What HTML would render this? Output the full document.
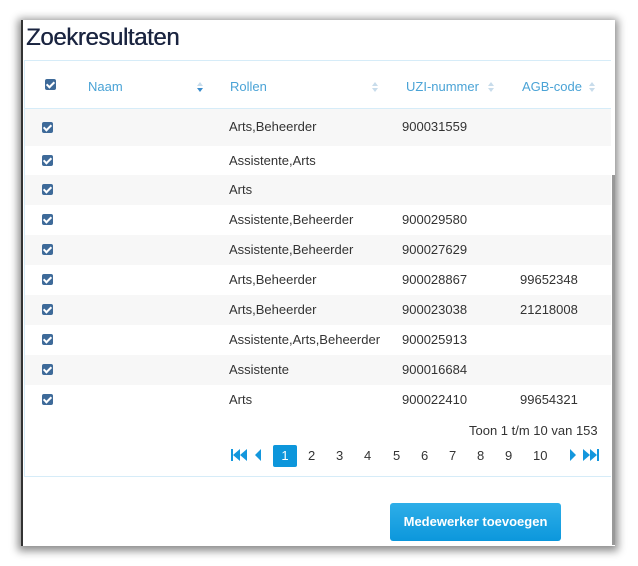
<!DOCTYPE html>
<html><head><style>
body{margin:0;width:638px;height:566px;background:#fff;font-family:"Liberation Sans",sans-serif;position:relative;overflow:hidden}
.panel{position:absolute;left:21px;top:20px;width:592px;height:526px;background:#fff;box-shadow:0 2px 8px 3px rgba(0,0,0,.45);border-left:2px solid #333}
.sb{position:absolute;left:612px;top:175px;width:3px;height:370px;background:#999}
h1{position:absolute;left:26px;top:24px;margin:0;font-size:24px;font-weight:normal;color:#1a2440;letter-spacing:-.4px;text-shadow:0.4px 0 0 #1a2440}
.tbl{position:absolute;left:24px;top:60px;width:586px;height:415px;border:1px solid #d6ecf8;border-right:none}
.hdr{position:absolute;left:0;top:0;width:586px;height:47px;border-bottom:1px solid #d6ecf8}
.h{position:absolute;top:18px;font-size:13px;color:#4aa3d6}
.sort{position:absolute;top:20px;width:6px;height:12px}
.row{position:absolute;left:0;width:586px;height:30px;font-size:13px;color:#333}
.row span{position:absolute;top:7px}
.cb{position:absolute;left:17px;width:11px;height:11px;background:#3e6a99;border-radius:2px}
.cb:after{content:"";position:absolute;left:3px;top:1px;width:3px;height:6px;border:solid #fff;border-width:0 2px 2px 0;transform:rotate(45deg)}
.pg{position:absolute;top:448px;font-size:13px;color:#333}
.btn{position:absolute;left:390px;top:503px;width:171px;height:38px;background:linear-gradient(#2eaee8,#0c97dc);border-radius:3px;color:#fff;font-size:13px;font-weight:bold;text-align:center;line-height:38px}
</style></head><body>
<div class="panel"></div>
<div class="sb"></div>
<h1>Zoekresultaten</h1>
<div class="tbl">
<div class="hdr">
<div class="cb" style="top:18px;left:20px"></div>
<span class="h" style="left:63px">Naam</span>
<svg class="sort" style="left:172px" viewBox="0 0 6 12"><path d="M0 5L3 1 6 5Z" fill="#c8dceb"/><path d="M0 7L3 11 6 7Z" fill="#3a8ccc"/></svg>
<span class="h" style="left:205px">Rollen</span>
<svg class="sort" style="left:347px" viewBox="0 0 6 12"><path d="M0 5L3 1 6 5ZM0 7L3 11 6 7Z" fill="#c8dceb"/></svg>
<span class="h" style="left:381px">UZI-nummer</span>
<svg class="sort" style="left:463px" viewBox="0 0 6 12"><path d="M0 5L3 1 6 5ZM0 7L3 11 6 7Z" fill="#c8dceb"/></svg>
<span class="h" style="left:497px">AGB-code</span>
<svg class="sort" style="left:564px" viewBox="0 0 6 12"><path d="M0 5L3 1 6 5ZM0 7L3 11 6 7Z" fill="#c8dceb"/></svg>
</div>
<div class="row" style="top:48px;height:37px;background:#f7f7f7"><div class="cb" style="top:13px"></div><span style="left:204px;top:10px">Arts,Beheerder</span><span style="left:377px;top:10px">900031559</span></div>
<div class="row" style="top:85px"><div class="cb" style="top:9px"></div><span style="left:204px">Assistente,Arts</span></div>
<div class="row" style="top:114px;background:#f7f7f7"><div class="cb" style="top:9px"></div><span style="left:204px">Arts</span></div>
<div class="row" style="top:144px"><div class="cb" style="top:9px"></div><span style="left:204px">Assistente,Beheerder</span><span style="left:377px">900029580</span></div>
<div class="row" style="top:174px;background:#f7f7f7"><div class="cb" style="top:9px"></div><span style="left:204px">Assistente,Beheerder</span><span style="left:377px">900027629</span></div>
<div class="row" style="top:204px"><div class="cb" style="top:9px"></div><span style="left:204px">Arts,Beheerder</span><span style="left:377px">900028867</span><span style="left:495px">99652348</span></div>
<div class="row" style="top:234px;background:#f7f7f7"><div class="cb" style="top:9px"></div><span style="left:204px">Arts,Beheerder</span><span style="left:377px">900023038</span><span style="left:495px">21218008</span></div>
<div class="row" style="top:264px"><div class="cb" style="top:9px"></div><span style="left:204px">Assistente,Arts,Beheerder</span><span style="left:377px">900025913</span></div>
<div class="row" style="top:294px;background:#f7f7f7"><div class="cb" style="top:9px"></div><span style="left:204px">Assistente</span><span style="left:377px">900016684</span></div>
<div class="row" style="top:324px"><div class="cb" style="top:9px"></div><span style="left:204px">Arts</span><span style="left:377px">900022410</span><span style="left:495px">99654321</span></div>
</div>
<div class="pg" style="left:469px;top:423px">Toon 1 t/m 10 van 153</div>
<svg style="position:absolute;left:230px;top:448px" width="34" height="14" viewBox="0 0 34 14"><path d="M1 1h2v12H1zM10 1L3 7l7 6zM17 1L10 7l7 6zM31 1L25 7l6 6z" fill="#1497dd"/></svg>
<div style="position:absolute;left:273px;top:445px;width:24px;height:22px;background:#0d96db;border-radius:2px;color:#fff;font-size:13px;text-align:center;line-height:22px">1</div>
<span class="pg" style="left:308px">2</span><span class="pg" style="left:336px">3</span><span class="pg" style="left:364px">4</span><span class="pg" style="left:393px">5</span><span class="pg" style="left:421px">6</span><span class="pg" style="left:449px">7</span><span class="pg" style="left:477px">8</span><span class="pg" style="left:505px">9</span><span class="pg" style="left:533px">10</span>
<svg style="position:absolute;left:569px;top:448px" width="32" height="14" viewBox="0 0 32 14"><path d="M1 1l6 6-6 6zM14 1l7 6-7 6zM21 1l7 6-7 6zM28 1h2v12h-2z" fill="#1497dd"/></svg>
<div style="position:absolute;left:24px;top:476px;width:586px;height:1px;background:#d6ecf8"></div>
<div class="btn">Medewerker toevoegen</div>
</body></html>
